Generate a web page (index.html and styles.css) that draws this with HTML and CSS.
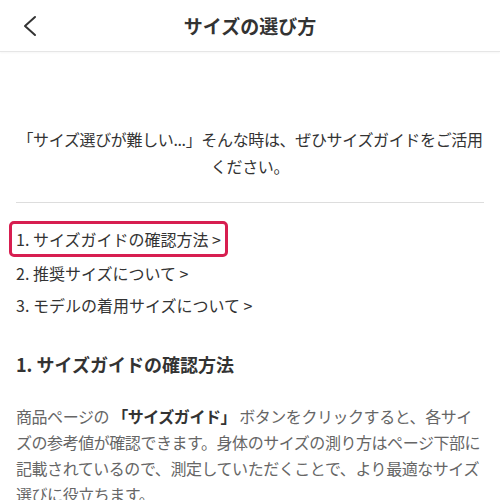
FILE: index.html
```html
<!DOCTYPE html>
<html lang="ja">
<head>
<meta charset="utf-8">
<link rel="stylesheet" href="styles.css">
</head>
<body>
<header class="header">
  <span class="back">
    <svg width="14" height="24" viewBox="0 0 14 24"><path d="M12 3 L2 12 L12 21" fill="none" stroke="#333" stroke-width="2" stroke-linecap="round" stroke-linejoin="round"/></svg>
  </span>
  <h1 class="title">サイズの選び方</h1>
</header>
<main class="main">
  <p class="intro">「サイズ選びが難しい...」そんな時は、ぜひサイズガイドをご活用ください。</p>
  <hr class="divider">
  <ul class="toc">
    <li class="toc-item"><span class="toc-link active">1. サイズガイドの確認方法 &gt;</span></li>
    <li class="toc-item"><span class="toc-link">2. 推奨サイズについて &gt;</span></li>
    <li class="toc-item"><span class="toc-link">3. モデルの着用サイズについて &gt;</span></li>
  </ul>
  <h2 class="section-title">1. サイズガイドの確認方法</h2>
  <p class="body">商品ページの <b>「サイズガイド」</b> ボタンをクリックすると、各サイズの参考値が確認できます。身体のサイズの測り方はページ下部に記載されているので、測定していただくことで、より最適なサイズ選びに役立ちます。</p>
</main>
</body>
</html>
```
FILE: styles.css
```css
* { box-sizing: border-box; }
html, body { margin: 0; padding: 0; background: #fff; }
body {
  font-family: "Noto Sans CJK JP", "Noto Sans", sans-serif;
  color: #333;
  width: 500px;
  overflow: hidden;
}
.header {
  height: 52px;
  display: flex;
  align-items: center;
  justify-content: center;
  position: relative;
  border-bottom: 1px solid #e6e6e6;
  box-shadow: 0 1px 2px rgba(0,0,0,0.04);
}
.back {
  position: absolute;
  left: 23px;
  top: 14px;
  display: flex;
}
.title {
  margin: 0;
  font-size: 19px;
  font-weight: 700;
  color: #333;
  line-height: 24px;
}
.main {
  padding: 0 16px;
}
.intro {
  margin: 74px 0 0;
  font-size: 16px;
  line-height: 27px;
  text-align: center;
  color: #333;
  letter-spacing: -0.35px;
}
.divider {
  border: 0;
  border-top: 1px solid #ddd;
  margin: 22px 0 0;
}
.toc {
  list-style: none;
  margin: 18px 0 0;
  padding: 0;
}
.toc-item {
  font-size: 16px;
  line-height: 32px;
}
.toc-link {
  display: inline-block;
}
.toc-link.active {
  margin-left: -7px;
  padding: 3px 4px;
  line-height: 24px;
  border: 3px solid #d71e50;
  border-radius: 5px;
}
.section-title {
  margin: 30px 0 0;
  font-size: 18px;
  font-weight: 700;
  line-height: 26px;
  color: #333;
}
.body {
  margin: 26px 0 0;
  font-size: 16px;
  line-height: 26px;
  color: #666;
  letter-spacing: -0.45px;
}
.body b {
  font-weight: 700;
  color: #333;
}
```
